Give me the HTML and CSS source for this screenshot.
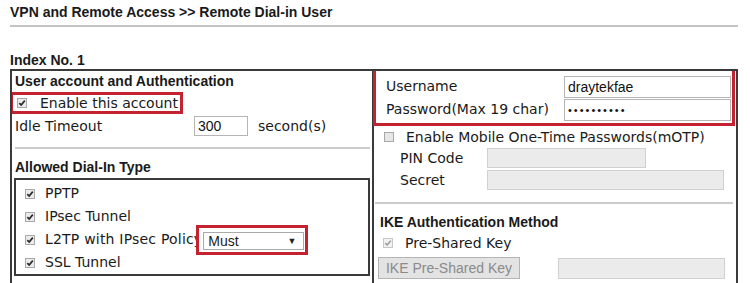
FILE: index.html
```html
<!DOCTYPE html>
<html lang="en">
<head>
    <meta charset="UTF-8">
    <meta name="viewport" content="width=device-width, initial-scale=1.0">
    <title>Remote Dial-in User</title>
    <link rel="stylesheet" href="styles.css">
</head>
<body>
    <svg class="defs" width="0" height="0" aria-hidden="true">
        <symbol id="cb-on" viewBox="0 0 10 10">
            <rect x="0.5" y="0.5" width="9" height="9" fill="#ececec" stroke="#a8a8a8"/>
            <path d="M2.3 5.1 L4.2 7 L7.8 2.6" fill="none" stroke="#2a2a2a" stroke-width="1.7"/>
        </symbol>
        <symbol id="cb-off" viewBox="0 0 10 10">
            <rect x="0.5" y="0.5" width="9" height="9" fill="#e6e6e6" stroke="#a8a8a8"/>
        </symbol>
        <symbol id="cb-dis" viewBox="0 0 10 10">
            <rect x="0.5" y="0.5" width="9" height="9" fill="#f1f1f1" stroke="#c8c8c8"/>
            <path d="M2.3 5.1 L4.2 7 L7.8 2.6" fill="none" stroke="#9a9a9a" stroke-width="1.5"/>
        </symbol>
    </svg>

    <div class="page">
        <h1 class="title">VPN and Remote Access &gt;&gt; Remote Dial-in User</h1>
        <div class="index">Index No. 1</div>

        <div class="panel">
            <div class="cell cell-left">
                <h2 class="sec">User account and Authentication</h2>
                <div class="row row-enable">
                    <label class="check mark-red">
                        <svg class="cb"><use href="#cb-on"/></svg>
                        Enable this account
                    </label>
                </div>
                <div class="row row-idle">
                    <span class="idle-label">Idle Timeout</span>
                    <input type="text" class="field f-idle" value="300">
                    <span>second(s)</span>
                </div>

                <hr class="sep">

                <h2 class="sec sec-dial">Allowed Dial-In Type</h2>
                <div class="types">
                    <div class="type"><svg class="cb"><use href="#cb-on"/></svg>PPTP</div>
                    <div class="type"><svg class="cb"><use href="#cb-on"/></svg>IPsec Tunnel</div>
                    <div class="type">
                        <svg class="cb"><use href="#cb-on"/></svg><span class="type-wide">L2TP with IPsec Policy</span>
                        <span class="policy mark-red">
                            <span class="select">Must<span class="arrow">&#9660;</span></span>
                        </span>
                    </div>
                    <div class="type"><svg class="cb"><use href="#cb-on"/></svg>SSL Tunnel</div>
                </div>
            </div>

            <div class="cell cell-right">
                <div class="creds mark-red">
                    <div class="cred-row">
                        <span class="cred-label">Username</span>
                        <input type="text" class="field f-cred" value="draytekfae">
                    </div>
                    <div class="cred-row">
                        <span class="cred-label">Password(Max 19 char)</span>
                        <input type="text" class="field f-cred f-pass" value="••••••••••">
                    </div>
                </div>

                <div class="row row-motp">
                    <svg class="cb"><use href="#cb-off"/></svg>
                    Enable Mobile One-Time Passwords(mOTP)
                </div>
                <div class="row row-sub">
                    <span class="sub-label">PIN Code</span>
                    <input type="text" class="field f-off f-pin" disabled>
                </div>
                <div class="row row-sub">
                    <span class="sub-label">Secret</span>
                    <input type="text" class="field f-off f-secret" disabled>
                </div>

                <hr class="sep sep-right">

                <h2 class="sec sec-ike">IKE Authentication Method</h2>
                <div class="row row-psk">
                    <svg class="cb"><use href="#cb-dis"/></svg>
                    <span class="psk-text">Pre-Shared Key</span>
                </div>
                <div class="row row-btn">
                    <button class="btn-psk" disabled>IKE Pre-Shared Key</button>
                    <input type="text" class="field f-off f-key" disabled>
                </div>
            </div>
        </div>
    </div>
</body>
</html>
```

FILE: styles.css
```css
body{
    margin: 0;
    background-color: #fff;
    color: #1a1a1a;
    font-family: "DejaVu Sans", Verdana, sans-serif;
    font-size: 14px;
}
.defs{
    position: absolute;
    width: 0;
    height: 0;
}
.page{
    padding: 0 12px 0 10px;
}
.title{
    margin: 0;
    padding: 3px 0 4px;
    font: bold 14px/18px "Liberation Sans", Arial, sans-serif;
    border-bottom: 2px solid #c4c4c4;
}
.index{
    margin-top: 24px;
    font: bold 14px/18px "Liberation Sans", Arial, sans-serif;
}
.panel{
    display: grid;
    grid-template-columns: 362px 1fr;
    height: 212px;
    overflow: hidden;
    border: 2px solid #3a3a3a;
    border-bottom: none;
}
.cell-left{
    padding-left: 3px;
    border-right: 2px solid #3a3a3a;
}
.cell-right{
    padding-left: 6px;
}
.sec{
    margin: 0;
    padding-top: 1px;
    font: bold 14px/18px "Liberation Sans", Arial, sans-serif;
}
.row{
    display: flex;
    align-items: center;
    height: 22px;
    line-height: 22px;
    white-space: nowrap;
}
.cb{
    width: 10px;
    height: 10px;
    flex: none;
}
.mark-red{
    outline: 3px solid #c42231;
}

/* left cell */
.row-enable{
    margin-top: 2px;
}
.check{
    display: inline-flex;
    align-items: center;
    height: 16px;
    margin-left: -2px;
    padding: 0 2px 0 4px;
    line-height: 16px;
}
.check .cb{
    margin-right: 13px;
}
.row-idle{
    margin-top: 1px;
}
.idle-label{
    width: 179px;
}
.field{
    box-sizing: border-box;
    height: 20px;
    margin: 0;
    padding: 0 3px;
    border: 1px solid #b5b5b5;
    background-color: #fff;
    color: #111;
    font: 14px "Liberation Sans", Arial, sans-serif;
}
.f-idle{
    width: 54px;
    margin-right: 10px;
}
.sep{
    margin: 10px 2px 0 0;
    border: none;
    border-top: 2px solid #cbcbcb;
}
.sec-dial{
    margin-top: 8px;
}
.types{
    margin: 2px 2px 0 -1px;
    padding: 2px 0 0 9px;
    border: 2px solid #3a3a3a;
}
.type{
    display: flex;
    align-items: center;
    height: 23px;
    line-height: 23px;
    white-space: nowrap;
}
.type .cb{
    margin-right: 10px;
}
.type-wide{
    letter-spacing: 0.2px;
}
.policy{
    position: relative;
    display: inline-flex;
    margin-left: -3px;
    padding: 4px 1px 2px 4px;
    background-color: #fff;
}
.select{
    box-sizing: border-box;
    display: flex;
    justify-content: space-between;
    align-items: center;
    width: 101px;
    height: 18px;
    padding: 0 7px 0 4px;
    border: 1px solid #a9a9a9;
    background-color: #fff;
    font: 14px/16px "Liberation Sans", Arial, sans-serif;
}
.arrow{
    font-size: 9px;
    color: #222;
}

/* right cell */
.creds{
    margin: -1px 4px 0 -4px;
    padding: 5px 0 2px 10px;
}
.cred-row{
    display: flex;
    align-items: center;
    height: 23px;
    line-height: 23px;
}
.cred-label{
    width: 178px;
}
.f-cred{
    width: 167px;
    height: 22px;
}
.f-pass{
    font-size: 11px;
    letter-spacing: 2px;
}
.row-motp{
    height: 21px;
    margin-top: 3px;
}
.row-motp .cb{
    margin: 0 12px 0 4px;
}
.sub-label{
    width: 87px;
    padding-left: 20px;
}
.f-off{
    border-color: #d0d0d0;
    background-color: #ebebeb;
}
.f-pin{
    width: 159px;
}
.f-secret{
    width: 237px;
}
.sep-right{
    margin: 11px 3px 0 -5px;
}
.sec-ike{
    margin-top: 8px;
}
.row-psk{
    margin-top: 1px;
}
.row-psk .cb{
    margin: 0 12px 0 3px;
}
.row-btn{
    margin-top: 3px;
}
.btn-psk{
    box-sizing: border-box;
    width: 142px;
    height: 22px;
    margin: 0 38px 0 -2px;
    padding: 0;
    border: 1px solid #b4b4b4;
    background-color: #e3e3e3;
    color: #8a8a8a;
    font: 14px "Liberation Sans", Arial, sans-serif;
}
.f-key{
    width: 167px;
    height: 21px;
}
```
